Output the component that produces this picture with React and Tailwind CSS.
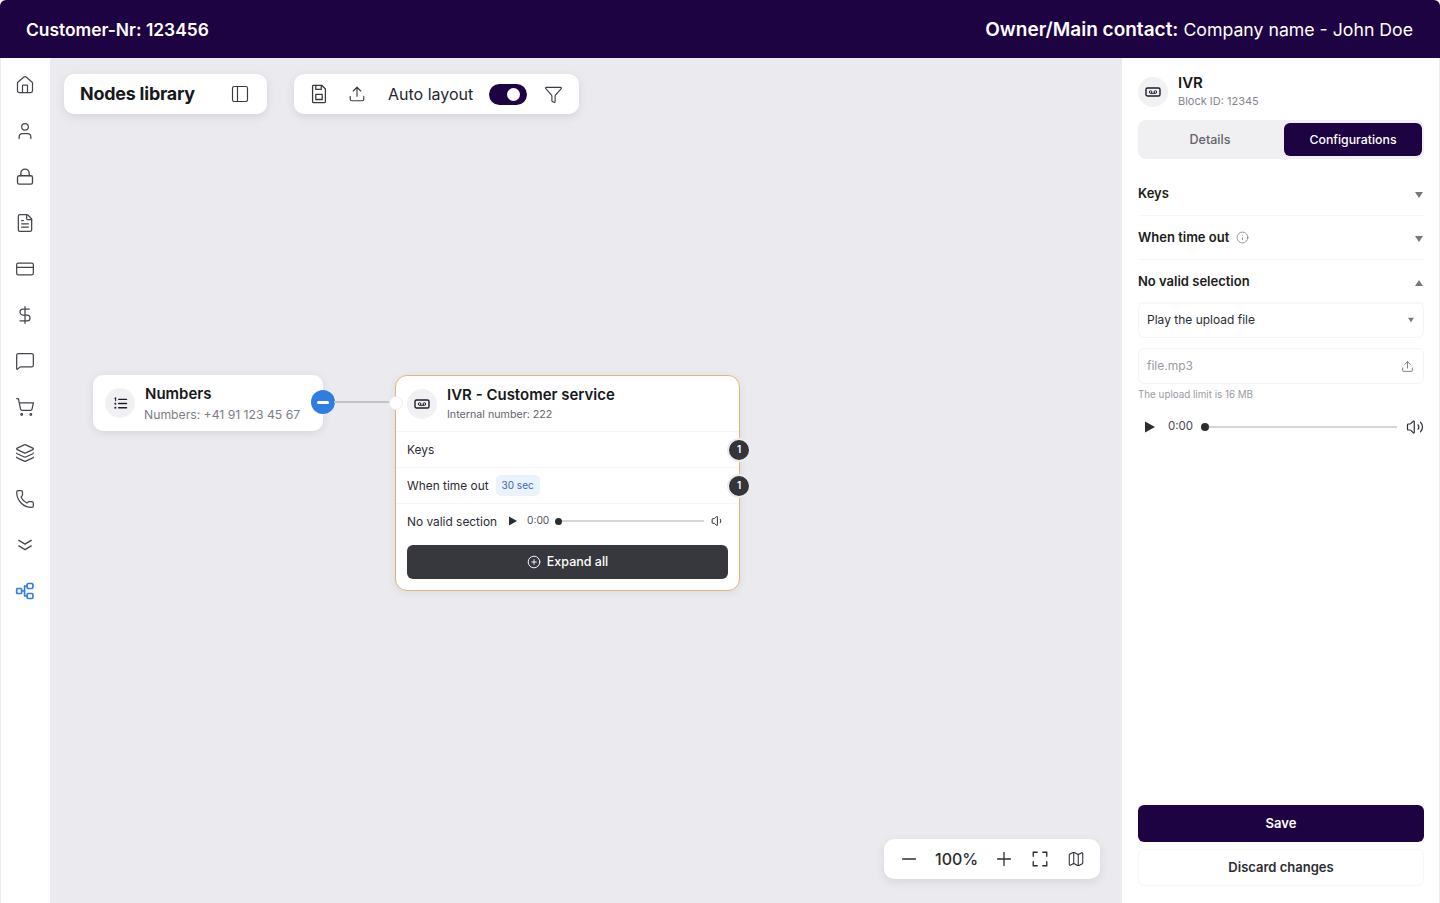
import {
  House, User, FileText, CreditCard, DollarSign, MessageSquare, ShoppingCart, Layers, Phone,
  PanelLeft, Upload, Funnel, Minus, Plus, Map, Volume1, Volume2, Info, CirclePlus,
} from "lucide-react";

const FONT = "font-['Inter',_'Liberation_Sans',_sans-serif]";

function Lock2({ className }) {
  return (
    <svg viewBox="0 0 24 24" fill="none" stroke="currentColor" strokeWidth="1.6" strokeLinecap="round" strokeLinejoin="round" className={className}>
      <rect x="3" y="10.5" width="18" height="10" rx="2" />
      <path d="M7 10.5v-3a5 5 0 0 1 10 0v3" />
    </svg>
  );
}

function DoubleChevron({ className }) {
  return (
    <svg viewBox="0 0 24 24" fill="none" stroke="currentColor" strokeWidth="1.6" strokeLinecap="round" strokeLinejoin="round" className={className}>
      <path d="M4.5 6.5 12 11l7.5-4.5" />
      <path d="M4.5 13 12 17.5l7.5-4.5" />
    </svg>
  );
}

function FlowIcon({ className }) {
  return (
    <svg viewBox="0 0 24 24" fill="none" stroke="currentColor" strokeWidth="2" strokeLinecap="round" strokeLinejoin="round" className={className}>
      <rect x="2" y="9" width="6" height="6" rx="1" />
      <rect x="14.5" y="3" width="7" height="6" rx="1.5" />
      <rect x="14.5" y="15" width="7" height="6" rx="1.5" />
      <path d="M8 12h3.5m0-6v12m0-12h3m-3 12h3" />
    </svg>
  );
}

function FloppyIcon({ className }) {
  return (
    <svg viewBox="0 0 24 24" fill="none" stroke="currentColor" strokeWidth="1.4" strokeLinecap="round" strokeLinejoin="round" className={className}>
      <path d="M5 3.5a1 1 0 0 1 1-1h9l4 4v14a1 1 0 0 1-1 1H6a1 1 0 0 1-1-1z" />
      <path d="M8.5 2.5v4.5h6V2.5" />
      <rect x="8.5" y="12.5" width="7" height="5.5" />
    </svg>
  );
}

function IvrIcon({ className }) {
  return (
    <svg viewBox="0 0 16 16" fill="none" stroke="currentColor" strokeWidth="1.4" className={className}>
      <rect x="1" y="4" width="14" height="8" rx="1.6" />
      <circle cx="5.6" cy="8" r="1.3" strokeWidth="1" />
      <circle cx="10.4" cy="8" r="1.3" strokeWidth="1" />
      <path d="M5.6 9.3h4.8" strokeWidth="1" />
    </svg>
  );
}

function ListIcon({ className }) {
  return (
    <svg viewBox="0 0 16 16" fill="none" stroke="currentColor" strokeWidth="1.4" strokeLinecap="round" className={className}>
      <path d="M6 3.5h8.5M6 8h8.5M6 12.5h8.5" />
      <path d="M2 2.5l.8-.5v3" strokeWidth="1.1" />
      <circle cx="2.5" cy="8.2" r="1.1" fill="currentColor" stroke="none" />
      <circle cx="2.5" cy="12.6" r="1.1" fill="currentColor" stroke="none" />
    </svg>
  );
}

function ScanIcon({ className }) {
  return (
    <svg viewBox="0 0 24 24" fill="none" stroke="currentColor" strokeWidth="1.8" strokeLinecap="square" className={className}>
      <path d="M3 8V3h5M16 3h5v5M21 16v5h-5M8 21H3v-5" />
    </svg>
  );
}

function Triangle({ up, className }) {
  return (
    <svg viewBox="0 0 8 7" fill="currentColor" className={className}>
      <path d={up ? "M4 0.5 8 6.5H0z" : "M0 0.5h8L4 6.5z"} />
    </svg>
  );
}

function PlayIcon({ className }) {
  return (
    <svg viewBox="0 0 10 12" fill="currentColor" className={className}>
      <path d="M0 0.5 10 6 0 11.5z" />
    </svg>
  );
}

const railIcons = [House, User, Lock2, FileText, CreditCard, DollarSign, MessageSquare, ShoppingCart, Layers, Phone, DoubleChevron];

function IconCircle({ children }) {
  return (
    <div className="w-[30px] h-[30px] rounded-full bg-[#f1f1f3] flex items-center justify-center shrink-0 text-[#1d1d2b]">
      {children}
    </div>
  );
}

function Toolbar({ className, children }) {
  return (
    <div className={`h-10 bg-white rounded-[10px] shadow-[0_3px_10px_rgba(30,30,50,0.1)] flex items-center ${className}`}>
      {children}
    </div>
  );
}

function Accordion({ label, info, up }) {
  return (
    <div className="h-11 flex items-center justify-between border-b border-[#f7f7f8]">
      <div className="flex items-center gap-[7px]">
        <span className="text-[13px] font-semibold text-[#1b1b20]">{label}</span>
        {info && <Info className="w-[13px] h-[13px] text-[#77777f]" strokeWidth={1.4} />}
      </div>
      <Triangle up={up} className="w-2 h-2 text-[#77777f] mr-[1px] mt-[2px]" />
    </div>
  );
}

function CountBadge() {
  return (
    <div className="absolute -right-[12px] top-1/2 -translate-y-1/2 w-[20px] h-[20px] rounded-full bg-[#34343a] border-2 border-[#ececf0] box-content flex items-center justify-center text-white text-[10px] font-semibold">
      1
    </div>
  );
}

export default function App() {
  return (
    <div className={`w-[1440px] h-[903px] overflow-hidden bg-white flex flex-col ${FONT}`}>
      {/* Top bar */}
      <header className="h-[58px] shrink-0 bg-[#1e0342] rounded-t-[6px] pl-[26px] pr-[27px] flex items-center justify-between text-white">
        <div className="text-[17.4px] font-semibold mt-[2px]">Customer-Nr: 123456</div>
        <div className="text-[17.7px] mt-[2px]"><span className="text-[19px] font-semibold">Owner/Main contact:</span> Company name - John Doe</div>
      </header>

      <div className="flex-1 flex min-h-0">
        {/* Left rail */}
        <nav className="w-[50px] shrink-0 border-l border-[#ececef] flex flex-col items-center pt-[17px] pr-[1px] gap-[26px] text-[#46464e]">
          {railIcons.map((Icon, i) => (
            <Icon key={i} className="w-5 h-5" strokeWidth={1.5} />
          ))}
          <FlowIcon className="w-5 h-5 text-[#2f7de1]" />
        </nav>

        {/* Canvas */}
        <main className="relative flex-1 bg-[#ebebef] pt-4 pl-[14px] flex items-start gap-[27px]">
          <Toolbar className="w-[203px] pl-4 pr-[17px] justify-between">
            <span className="text-[17.9px] font-bold text-[#17171c] tracking-[-0.2px] pt-[1px]">Nodes library</span>
            <PanelLeft className="w-5 h-5 text-[#3a3a42]" strokeWidth={1.4} />
          </Toolbar>
          <Toolbar className="w-[285px] pl-[14px]">
            <FloppyIcon className="w-[22px] h-[22px] text-[#3a3a42]" />
            <Upload className="w-[18px] h-[18px] text-[#3a3a42] ml-[18px]" strokeWidth={1.5} />
            <span className="ml-[22px] text-[16px] text-[#26262c]">Auto layout</span>
            <div className="ml-4 w-[38px] h-[21px] rounded-full bg-[#1e0342] relative">
              <div className="absolute right-[7px] top-[4px] w-[13px] h-[13px] rounded-full bg-white" />
            </div>
            <Funnel className="w-[19px] h-[19px] ml-[17px] text-[#3a3a42]" strokeWidth={1.4} />
          </Toolbar>

          {/* Numbers node */}
          <div className="absolute left-[43px] top-[317px] w-[230px] h-14 bg-white rounded-[10px] shadow-[0_2px_8px_rgba(30,30,50,0.1)] pl-3 flex items-center gap-[10px]">
            <IconCircle><ListIcon className="w-[15px] h-[15px]" /></IconCircle>
            <div>
              <div className="text-[15px] font-semibold leading-[19px] text-[#17171c]">Numbers</div>
              <div className="text-[12.2px] leading-[16px] mt-[4px] -ml-[1px] text-[#7d7d87]">Numbers: +41 91 123 45 67</div>
            </div>
            <div className="absolute -right-[12px] top-[15px] w-6 h-6 rounded-full bg-[#2f7de1] flex items-center justify-center shadow-[0_0_0_1px_rgba(255,255,255,0.4)]">
              <div className="w-[12px] h-[3px] rounded-full bg-white" />
            </div>
          </div>

          {/* Connector between the two nodes */}
          <div className="absolute left-[284px] top-[343px] w-[56px] h-[2px] bg-[#c3c3ca]" />

          {/* IVR node */}
          <div className="absolute left-[345px] top-[317px] w-[345px] h-[216px] bg-white border border-[#e2b47c] rounded-[12px] shadow-[0_2px_8px_rgba(30,30,50,0.08)] flex flex-col">
            <div className="absolute -left-[7px] top-[20px] w-[14px] h-[14px] rounded-full bg-white border border-[#ececf0]" />
            <div className="h-[56px] shrink-0 pl-[11px] flex items-center gap-[10px] border-b border-[#f6f6f7]">
              <IconCircle><IvrIcon className="w-4 h-4" /></IconCircle>
              <div>
                <div className="text-[15px] font-semibold leading-[19px] text-[#17171c]">IVR - Customer service</div>
                <div className="text-[10.7px] leading-[14px] mt-[4px] text-[#63636c]">Internal number: 222</div>
              </div>
            </div>
            <div className="relative h-9 shrink-0 px-[11px] flex items-center border-b border-[#f6f6f7] text-[11.9px] text-[#2c2c33]">
              Keys
              <CountBadge />
            </div>
            <div className="relative h-9 shrink-0 px-[11px] flex items-center gap-[7px] border-b border-[#f6f6f7] text-[11.9px] text-[#2c2c33]">
              When time out
              <span className="h-[21px] px-[6px] rounded-[5px] bg-[#eaf2fc] text-[#3b68b8] text-[10px] flex items-center">30 sec</span>
              <CountBadge />
            </div>
            <div className="h-9 shrink-0 pl-[11px] pr-[14px] flex items-center text-[11.9px] text-[#2c2c33]">
              No valid section
              <PlayIcon className="w-[8px] h-[10px] ml-[12px] -mt-[2px] text-[#2c2c33]" />
              <span className="ml-[10px] -mt-[2px] text-[10.2px] text-[#55555e]">0:00</span>
              <div className="ml-[6px] -mt-[2px] w-[7px] h-[7px] rounded-full bg-[#2c2c33] shrink-0" />
              <div className="flex-1 -mt-[2px] h-[2px] bg-[#d5d5d9]" />
              <Volume1 className="ml-[7px] -mt-[2px] w-[14px] h-[14px] text-[#2c2c33]" strokeWidth={1.7} />
            </div>
            <div className="px-[11px] mt-[5px]">
              <button className="w-full h-[34px] rounded-[6px] bg-[#37373e] text-white text-[12.5px] font-medium flex items-center justify-center gap-[6px]">
                <CirclePlus className="w-[14px] h-[14px]" strokeWidth={1.6} />
                Expand all
              </button>
            </div>
          </div>

          {/* Zoom controls */}
          <Toolbar className="absolute right-[22px] bottom-[24px] w-[216px] pl-[14px] text-[#2c2c33]">
            <Minus className="w-[22px] h-[22px]" strokeWidth={1.4} />
            <span className="ml-[15px] text-[16px] font-medium">100%</span>
            <Plus className="w-[22px] h-[22px] ml-[15px]" strokeWidth={1.4} />
            <ScanIcon className="w-[18px] h-[18px] ml-[16px]" />
            <Map className="w-[18px] h-[18px] ml-[18px]" strokeWidth={1.4} />
          </Toolbar>
        </main>

        {/* Right panel */}
        <aside className="w-[318px] shrink-0 bg-white pl-4 pr-[15px] flex flex-col border-r border-[#ececef]">
          <div className="flex items-center gap-[10px] mt-[18px]">
            <IconCircle><IvrIcon className="w-4 h-4" /></IconCircle>
            <div className="-mt-[2px]">
              <div className="text-[15px] font-semibold leading-[17px] text-[#17171c]">IVR</div>
              <div className="text-[11px] leading-[14px] mt-[3px] text-[#85858e]">Block ID: 12345</div>
            </div>
          </div>

          <div className="mt-[12px] h-[39px] rounded-[8px] bg-[#f0f0f2] flex items-center pr-[2px]">
            <div className="w-[144px] pt-[1px] text-center text-[12.5px] font-medium text-[#62626b]">Details</div>
            <div className="ml-[2px] flex-1 h-[33px] pt-[1px] rounded-[6px] bg-[#1e0342] text-white text-[12.3px] font-medium flex items-center justify-center">Configurations</div>
          </div>

          <div className="mt-[13px]">
            <Accordion label="Keys" />
            <Accordion label="When time out" info />
            <Accordion label="No valid selection" up />
          </div>

          <div className="-mt-[2px] h-9 rounded-[6px] border border-[#f4f4f5] pl-2 pr-[9px] flex items-center justify-between text-[12px] text-[#2c2c33]">
            Play the upload file
            <Triangle className="w-[6px] h-[6px] text-[#77777f]" />
          </div>
          <div className="mt-[10px] h-9 rounded-[6px] border border-[#f4f4f5] pl-2 pr-[9px] flex items-center justify-between text-[12px] text-[#9a9aa2]">
            file.mp3
            <Upload className="w-[13px] h-[13px] text-[#66666e]" strokeWidth={1.5} />
          </div>
          <div className="mt-[5px] text-[9.8px] leading-[12px] text-[#9a9aa2]">The upload limit is 16 MB</div>

          <div className="mt-4 h-[20px] pl-[7px] flex items-center text-[11.5px] text-[#4a4a52]">
            <PlayIcon className="w-[10px] h-[12px] text-[#2c2c33]" />
            <span className="ml-[13px]">0:00</span>
            <div className="ml-[8px] w-2 h-2 rounded-full bg-[#2c2c33] shrink-0" />
            <div className="flex-1 h-[2px] bg-[#d5d5d9]" />
            <Volume2 className="ml-[9px] w-[18px] h-[18px] text-[#2c2c33]" strokeWidth={1.6} />
          </div>

          <div className="mt-auto pb-[17px] flex flex-col gap-[7px]">
            <button className="h-[37px] rounded-[6px] bg-[#1e0342] text-white text-[13px] font-semibold">Save</button>
            <button className="h-[37px] rounded-[6px] border border-[#f6f6f7] text-[#2c2c33] text-[13px] font-semibold">Discard changes</button>
          </div>
        </aside>
      </div>
    </div>
  );
}
